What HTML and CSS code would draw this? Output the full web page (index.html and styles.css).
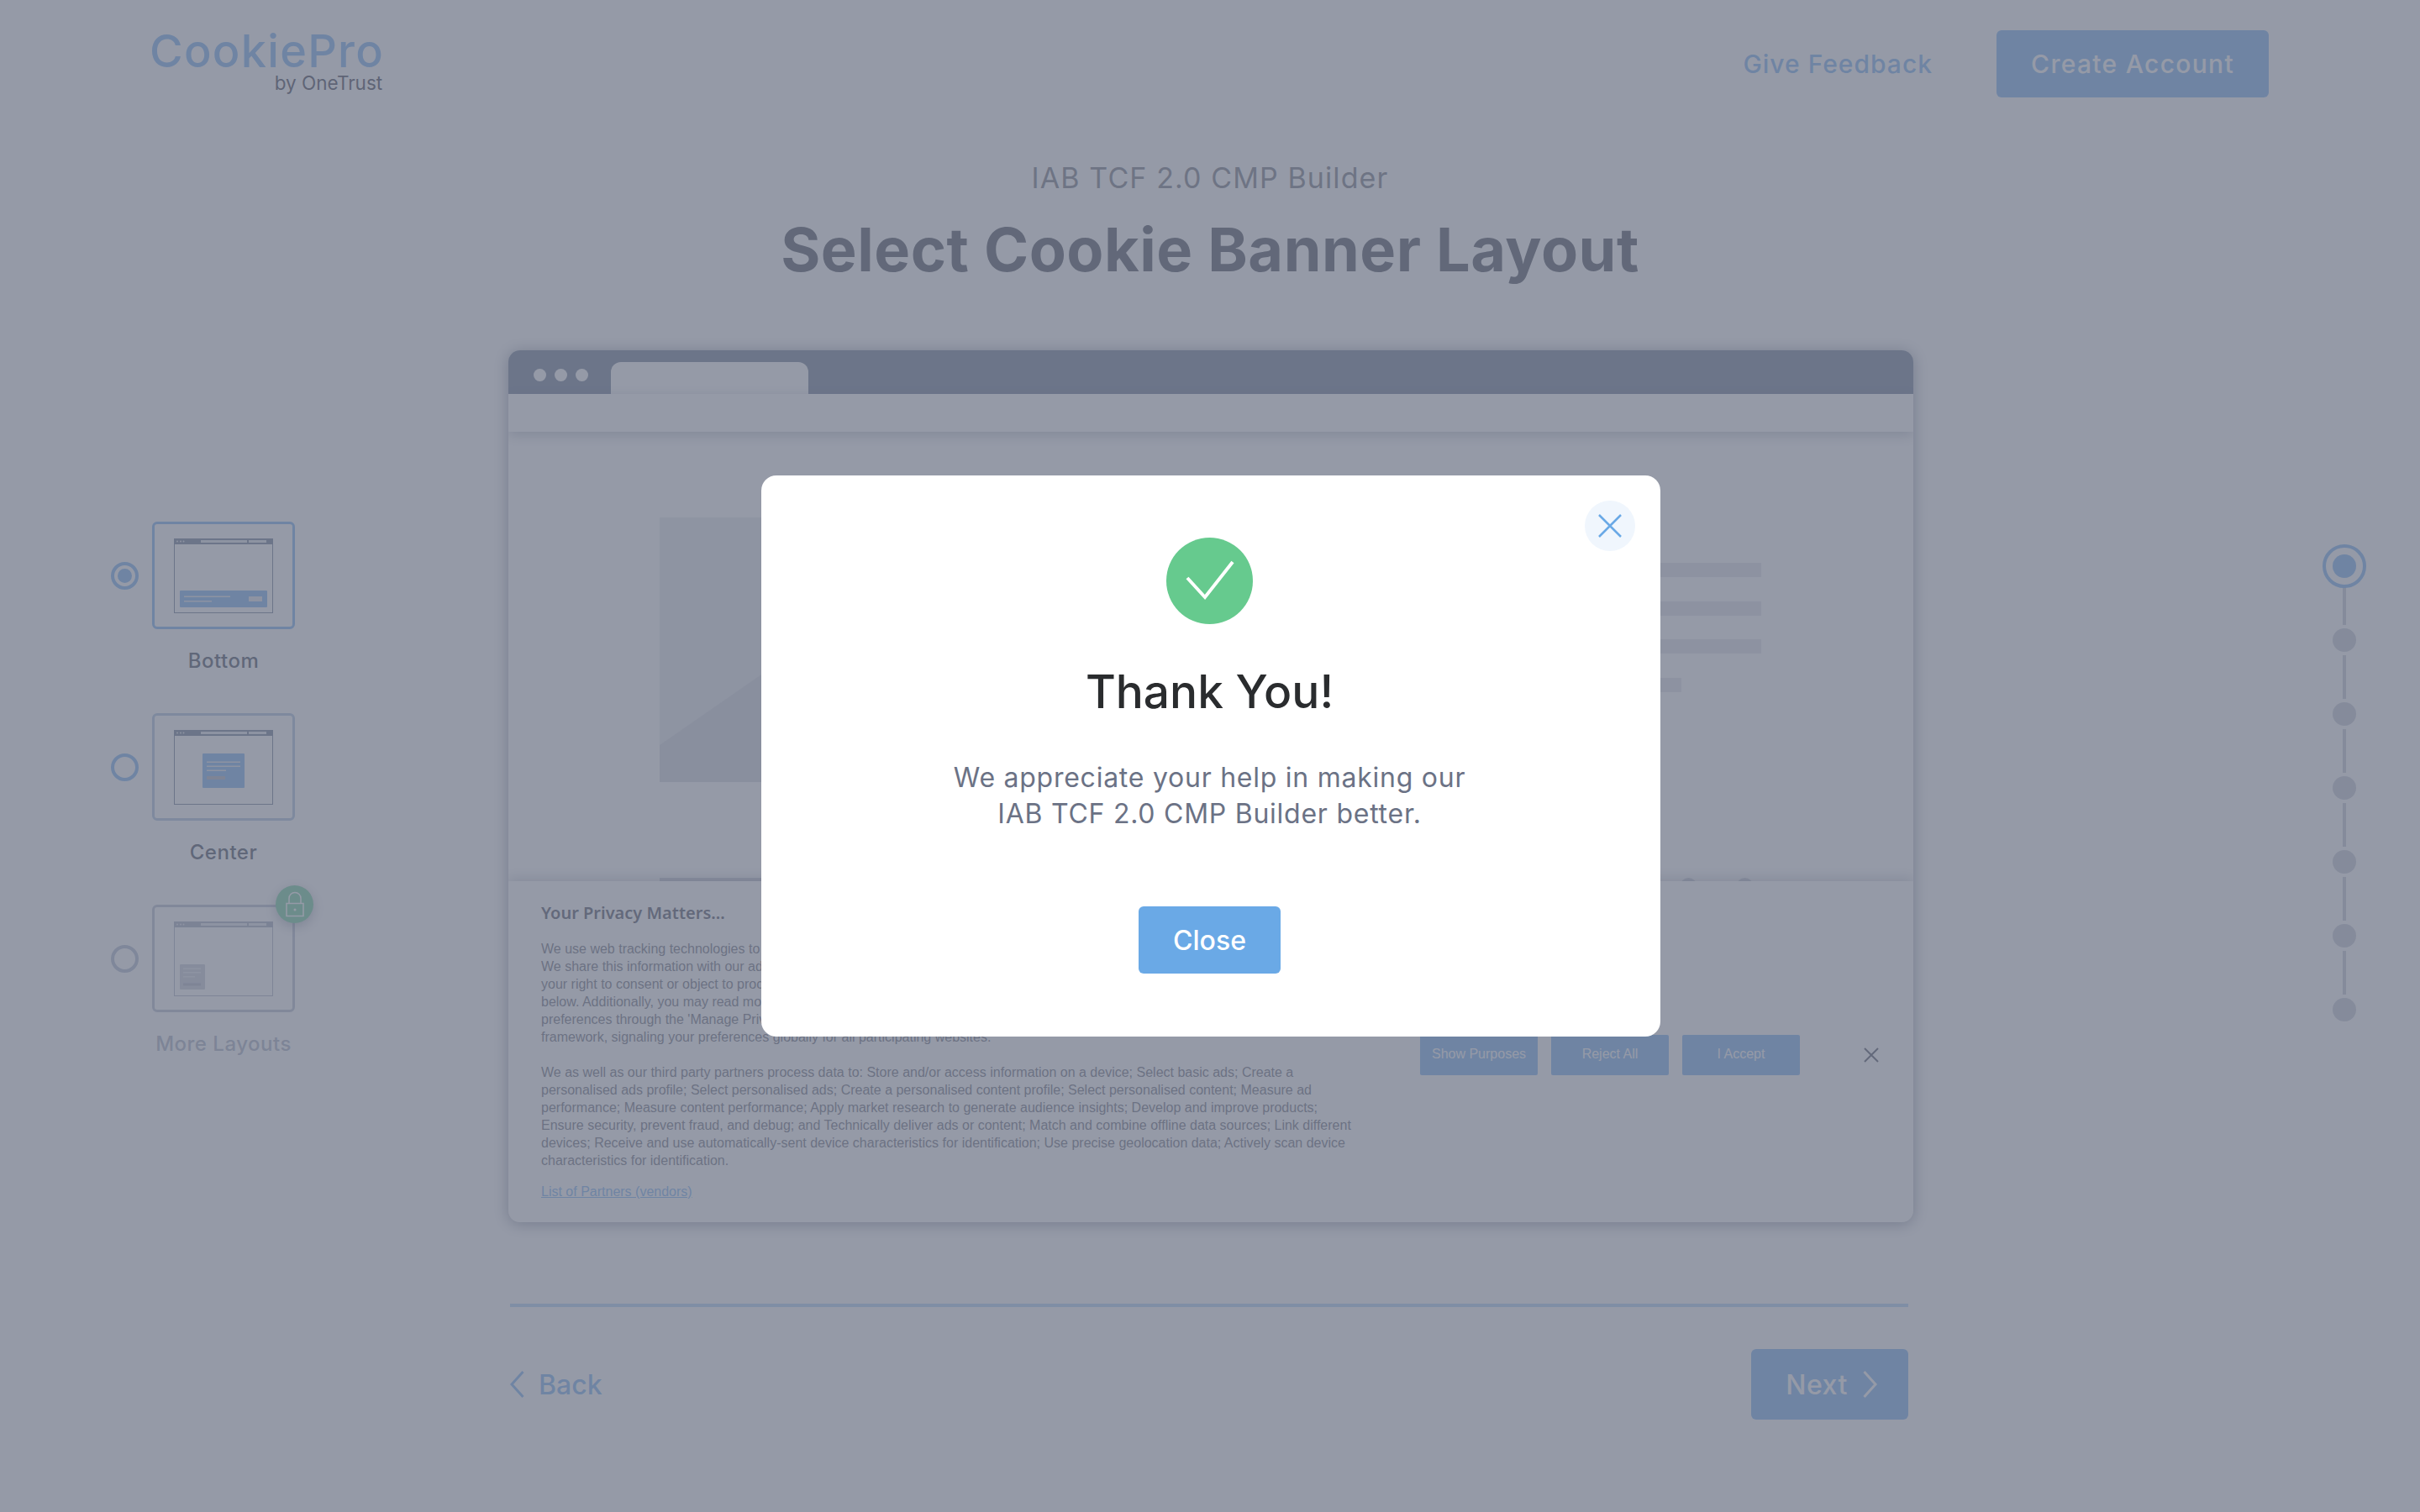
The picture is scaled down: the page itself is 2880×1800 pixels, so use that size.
FILE: index.html
```html
<!DOCTYPE html>
<html lang="en">
	<head>
		<meta charset="utf-8" />
		<title>IAB TCF 2.0 CMP Builder</title>
		<link rel="stylesheet" href="styles.css">
	</head>
	<body>
		<header class="topbar">
			<div class="logo">
				<div class="logo-name">CookiePro</div>
				<div class="logo-by">by OneTrust</div>
			</div>
			<nav class="topnav">
				<a class="feedback" href="#">Give Feedback</a>
				<a class="btn btn-account" href="#">Create Account</a>
			</nav>
		</header>

		<section class="intro">
			<p class="intro-sub">IAB TCF 2.0 CMP Builder</p>
			<h1 class="intro-title">Select Cookie Banner Layout</h1>
		</section>

		<main class="builder">
			<aside class="layouts">
				<div class="layout">
					<span class="radio radio-on"></span>
					<div class="thumb thumb-on">
						<svg class="mini" width="118" height="89" viewBox="0 0 118 89">
							<rect class="mini-frame" x="0.5" y="0.5" width="117" height="88"/>
							<rect class="mini-head" width="118" height="7"/>
							<circle class="mini-light" cx="4" cy="3.5" r="1"/><circle class="mini-light" cx="8" cy="3.5" r="1"/><circle class="mini-light" cx="11.5" cy="3.5" r="1"/>
							<rect class="mini-light" x="32" y="2" width="55" height="3"/><rect class="mini-light" x="89" y="2" width="21" height="3"/>
							<rect class="mini-blue" x="7" y="62" width="104" height="20" rx="1"/>
							<rect class="mini-light" x="12" y="68.5" width="55" height="1.5"/><rect class="mini-light" x="12" y="74" width="33" height="1.5"/>
							<rect class="mini-light" x="89" y="69" width="16" height="6"/>
						</svg>
					</div>
					<span class="layout-name">Bottom</span>
				</div>
				<div class="layout">
					<span class="radio"></span>
					<div class="thumb">
						<svg class="mini" width="118" height="89" viewBox="0 0 118 89">
							<rect class="mini-frame" x="0.5" y="0.5" width="117" height="88"/>
							<rect class="mini-head" width="118" height="7"/>
							<circle class="mini-light" cx="4" cy="3.5" r="1"/><circle class="mini-light" cx="8" cy="3.5" r="1"/><circle class="mini-light" cx="11.5" cy="3.5" r="1"/>
							<rect class="mini-light" x="32" y="2" width="55" height="3"/><rect class="mini-light" x="89" y="2" width="21" height="3"/>
							<rect class="mini-blue" x="34" y="28" width="50" height="41" rx="1"/>
							<rect class="mini-light" x="39" y="37.5" width="40" height="1.5"/><rect class="mini-light" x="39" y="42.5" width="40" height="1.5"/><rect class="mini-light" x="39" y="47.5" width="23" height="1.5"/>
							<rect class="mini-dim" x="39" y="55" width="22" height="4"/>
						</svg>
					</div>
					<span class="layout-name">Center</span>
				</div>
				<div class="layout layout-locked">
					<span class="radio"></span>
					<div class="thumb">
						<svg class="mini" width="118" height="89" viewBox="0 0 118 89">
							<rect class="mini-frame" x="0.5" y="0.5" width="117" height="88"/>
							<rect class="mini-head" width="118" height="7"/>
							<circle class="mini-light" cx="4" cy="3.5" r="1"/><circle class="mini-light" cx="8" cy="3.5" r="1"/><circle class="mini-light" cx="11.5" cy="3.5" r="1"/>
							<rect class="mini-light" x="32" y="2" width="55" height="3"/><rect class="mini-light" x="89" y="2" width="21" height="3"/>
							<rect class="mini-grey" x="7" y="51" width="30" height="30" rx="1"/>
							<rect class="mini-light" x="11" y="55.5" width="21" height="1.5"/><rect class="mini-light" x="11" y="60" width="21" height="1.5"/><rect class="mini-light" x="11" y="65" width="14" height="1.5"/>
							<rect class="mini-dim" x="11" y="73.5" width="21" height="3"/>
						</svg>
						<span class="lock">
							<svg width="24" height="32" viewBox="0 0 24 32">
								<rect class="lock-line" x="2" y="14.5" width="20" height="15"/>
								<path class="lock-line" d="M5 14.5V8.5a7 7 0 0 1 14 0v6"/>
								<circle class="lock-dot" cx="12" cy="22" r="1.5"/>
							</svg>
						</span>
					</div>
					<span class="layout-name">More Layouts</span>
				</div>
			</aside>

			<div class="stage">
				<div class="browser">
					<div class="browser-tabs">
						<span class="browser-dot"></span><span class="browser-dot"></span><span class="browser-dot"></span>
						<span class="browser-tab"></span>
					</div>
					<div class="browser-address"></div>
					<div class="browser-page">
						<div class="page-row">
							<svg class="page-image" width="620" height="315" viewBox="0 0 620 315">
								<rect class="image-bg" width="620" height="315"/>
								<path class="image-hill" d="M0 315V271L121 187L240 105L420 315Z"/>
							</svg>
							<div class="page-lines">
								<span class="page-line"></span><span class="page-line"></span><span class="page-line"></span><span class="page-line page-line-short"></span>
							</div>
						</div>
						<div class="page-peek">
							<span class="peek-bar"></span>
							<span class="peek-dots"><span class="peek-dot"></span><span class="peek-dot"></span></span>
						</div>
					</div>
					<div class="banner">
						<div class="banner-copy">
							<h3 class="banner-title">Your Privacy Matters...</h3>
							<p class="banner-text">We use web tracking technologies to collect information about your device and browsing.<br>We share this information with our advertising and analytics partners. You can exercise<br>your right to consent or object to processing based on legitimate interest using the links<br>below. Additionally, you may read more in our policy and change or withdraw your<br>preferences through the 'Manage Privacy Preferences' link using the industry consent<br>framework, signaling your preferences globally for all participating websites.</p>
							<p class="banner-text">We as well as our third party partners process data to: Store and/or access information on a device; Select basic ads; Create a<br>personalised ads profile; Select personalised ads; Create a personalised content profile; Select personalised content; Measure ad<br>performance; Measure content performance; Apply market research to generate audience insights; Develop and improve products;<br>Ensure security, prevent fraud, and debug; and Technically deliver ads or content; Match and combine offline data sources; Link different<br>devices; Receive and use automatically-sent device characteristics for identification; Use precise geolocation data; Actively scan device<br>characteristics for identification.</p>
							<a class="banner-link" href="#">List of Partners (vendors)</a>
						</div>
						<div class="banner-actions">
							<button class="banner-btn">Show Purposes</button>
							<button class="banner-btn">Reject All</button>
							<button class="banner-btn">I Accept</button>
							<svg class="banner-x" width="18" height="18" viewBox="0 0 18 18"><path d="M1 1L17 17M17 1L1 17"/></svg>
						</div>
					</div>
				</div>
				<div class="wizard-foot">
					<a class="back" href="#">
						<svg class="chevron" width="17" height="32" viewBox="0 0 17 32"><path d="M15.5 1L2 16L15.5 31"/></svg>
						Back
					</a>
					<a class="btn btn-next" href="#">
						Next
						<svg class="chevron" width="17" height="32" viewBox="0 0 17 32"><path d="M1.5 1L15 16L1.5 31"/></svg>
					</a>
				</div>
			</div>

			<aside class="steps">
				<span class="step step-on"></span>
				<span class="step-line"></span><span class="step"></span>
				<span class="step-line"></span><span class="step"></span>
				<span class="step-line"></span><span class="step"></span>
				<span class="step-line"></span><span class="step"></span>
				<span class="step-line"></span><span class="step"></span>
				<span class="step-line"></span><span class="step"></span>
			</aside>
		</main>

		<div class="overlay">
			<div class="modal">
				<button class="modal-x">
					<svg width="28" height="28" viewBox="0 0 28 28"><path d="M1 1L27 27M27 1L1 27"/></svg>
				</button>
				<svg class="modal-check" width="103" height="103" viewBox="0 0 103 103">
					<circle class="check-bg" cx="51.5" cy="51.5" r="51.5"/>
					<path class="check-mark" d="M25 48L46 71L79 29"/>
				</svg>
				<h2 class="modal-title">Thank You!</h2>
				<p class="modal-text">We appreciate your help in making our<br>IAB TCF 2.0 CMP Builder better.</p>
				<button class="btn-close">Close</button>
			</div>
		</div>
	</body>
</html>
```

FILE: styles.css
```css
html, body {
	margin: 0;
	padding: 0;
	width: 2880px;
	height: 1800px;
	overflow: hidden;
}
body {
	font-family: Inter, "Noto Sans", sans-serif;
	background-color: #fff;
	color: #30344c;
}
a {
	text-decoration: none;
}
h1, h2, h3, p {
	margin: 0;
}

.topbar {
	box-sizing: border-box;
	height: 116px;
	padding: 36px 180px 0 178px;
	display: flex;
	justify-content: space-between;
	align-items: flex-start;
}
.logo {
	text-align: right;
}
.logo-name {
	font-size: 54px;
	line-height: 50px;
	letter-spacing: 1.3px;
	color: #68a8f0;
	font-weight: 500;
}
.logo-by {
	font-size: 22.5px;
	line-height: 24px;
	color: #282a3c;
	margin-top: 1px;
	margin-right: 2px;
}
.topnav {
	display: flex;
	align-items: center;
	gap: 76px;
	font-size: 30px;
	font-weight: 500;
}
.feedback {
	color: #68a8f0;
	letter-spacing: 1px;
}
.btn {
	display: flex;
	align-items: center;
	justify-content: center;
	box-sizing: border-box;
	background-color: #68a8f0;
	color: #fff;
	border-radius: 6px;
	font-weight: 500;
	font-size: 30px;
}
.btn-account {
	width: 324px;
	height: 80px;
	letter-spacing: 1.3px;
}

.intro {
	box-sizing: border-box;
	height: 301px;
	padding-top: 75px;
	text-align: center;
}
.intro-sub {
	font-size: 34px;
	line-height: 42px;
	color: #646874;
	letter-spacing: 1.1px;
}
.intro-title {
	margin-top: 24px;
	font-size: 72px;
	line-height: 80px;
	font-weight: 700;
	letter-spacing: 0.5px;
	color: #343a48;
}

.builder {
	display: grid;
	grid-template-columns: 605px 1672px 603px;
}

.layouts {
	padding: 204px 0 0 132px;
}
.layout {
	display: grid;
	grid-template-columns: 33px 170px;
	column-gap: 16px;
	align-items: center;
	height: 228px;
	grid-template-rows: 128px auto;
	row-gap: 23px;
	align-content: start;
}
.radio {
	box-sizing: border-box;
	width: 33px;
	height: 33px;
	border-radius: 50%;
	border: 4px solid #68a8f0;
	display: flex;
	align-items: center;
	justify-content: center;
}
.radio-on::after {
	content: "";
	width: 17px;
	height: 17px;
	border-radius: 50%;
	background-color: #68a8f0;
}
.layout-locked .radio {
	border-color: #a8b4cc;
}
.thumb {
	box-sizing: border-box;
	position: relative;
	width: 170px;
	height: 128px;
	border: 3px solid #a4bcdc;
	border-radius: 6px;
	display: flex;
	align-items: center;
	justify-content: center;
}
.thumb-on {
	border-color: #68a8f0;
}
.layout-locked .thumb {
	border-color: #b0b8cc;
}
.layout-name {
	grid-column: 2;
	text-align: center;
	font-size: 24px;
	line-height: 30px;
	font-weight: 500;
	letter-spacing: 0.5px;
	color: #2c3448;
}
.layout-locked .layout-name {
	color: #a0a8bc;
}
.mini-frame {
	fill: #fff;
	stroke: #5c6c88;
}
.mini-head {
	fill: #5c6c88;
}
.mini-light {
	fill: #dfe3ea;
}
.mini-blue {
	fill: #68a8f0;
}
.mini-grey {
	fill: #c4c8d4;
}
.mini-dim {
	fill: #a4a8b8;
}
.layout-locked .mini-frame {
	stroke: #a4acc0;
}
.layout-locked .mini-head {
	fill: #9aa2b8;
}
.lock {
	position: absolute;
	right: -25px;
	top: -26px;
	width: 45px;
	height: 45px;
	border-radius: 50%;
	background-color: #5cc690;
	box-shadow: 0 4px 14px rgba(40, 50, 80, 0.4);
	display: flex;
	align-items: center;
	justify-content: center;
}
.lock-line {
	fill: none;
	stroke: #fff;
	stroke-width: 1.5;
}
.lock-dot {
	fill: #fff;
}

.browser {
	box-sizing: border-box;
	height: 1038px;
	border-radius: 14px;
	overflow: hidden;
	display: flex;
	flex-direction: column;
	background-color: #fff;
	box-shadow: 0 2px 18px rgba(40, 50, 80, 0.6);
}
.stage {
	min-width: 0;
}
.browser-tabs {
	height: 52px;
	flex: none;
	background-color: #5c6c88;
	display: flex;
	align-items: flex-end;
	padding-left: 30px;
	box-sizing: border-box;
}
.browser-dot {
	width: 15px;
	height: 15px;
	margin: 0 10px 15px 0;
	border-radius: 50%;
	background-color: #fff;
}
.browser-tab {
	width: 235px;
	height: 38px;
	margin-left: 17px;
	border-radius: 12px 12px 0 0;
	background-color: #fff;
}
.browser-address {
	height: 45px;
	flex: none;
	background-color: #fff;
	box-shadow: 0 4px 14px rgba(40, 50, 80, 0.35);
	position: relative;
}
.browser-page {
	flex: 1;
	min-height: 0;
	overflow: hidden;
	padding: 102px 181px 0 180px;
	display: flex;
	flex-direction: column;
	justify-content: space-between;
}
.page-row {
	display: flex;
	justify-content: space-between;
}
.image-bg {
	fill: #e2e5ea;
}
.image-hill {
	fill: #d0d4dc;
}
.page-lines {
	display: flex;
	flex-direction: column;
	gap: 28.5px;
	width: 460px;
	padding-top: 54px;
}
.page-line {
	height: 17px;
	background-color: #dde0e8;
}
.page-line-short {
	width: 365px;
}
.page-peek {
	height: 4px;
	flex: none;
	display: flex;
	justify-content: space-between;
}
.peek-bar {
	width: 620px;
	height: 4px;
	background-color: #c4c8d4;
}
.peek-dots {
	display: flex;
	gap: 48px;
	padding-right: 10px;
}
.peek-dot {
	width: 19px;
	height: 19px;
	border-radius: 50%;
	background-color: #c4c8d4;
}

.banner {
	box-sizing: border-box;
	height: 406px;
	flex: none;
	background-color: #fff;
	box-shadow: 0 -3px 14px rgba(40, 50, 80, 0.3);
	padding: 24px 0 0 39px;
	display: flex;
	position: relative;
}
.banner-copy {
	width: 1046px;
	flex: none;
}
.banner-title {
	font-family: "Noto Sans", sans-serif;
	font-size: 20px;
	line-height: 28px;
	font-weight: 600;
	color: #383c50;
}
.banner-text {
	font-family: "Liberation Sans", sans-serif;
	font-size: 16px;
	line-height: 21px;
	color: #5c6070;
	margin-top: 21px;
	white-space: nowrap;
}
.banner-title + .banner-text {
	margin-top: 18px;
}
.banner-link {
	display: block;
	margin-top: 16px;
	font-family: "Liberation Sans", sans-serif;
	font-size: 16px;
	line-height: 21px;
	color: #68a8f0;
	text-decoration: underline;
}
.banner-actions {
	display: flex;
	align-items: center;
	gap: 16px;
	height: 48px;
	margin-top: 159px;
}
.banner-btn {
	width: 140px;
	height: 48px;
	padding: 0 0 2px;
	border: 0;
	border-radius: 2px;
	background-color: #68a8f0;
	color: #fff;
	font-family: "Liberation Sans", sans-serif;
	font-size: 16px;
}
.banner-x {
	margin-left: 60px;
	fill: none;
	stroke: #383c50;
	stroke-width: 2;
}

.wizard-foot {
	margin: 97px 6px 0 2px;
	padding-top: 50px;
	border-top: 4px solid #a8d0f8;
	display: flex;
	justify-content: space-between;
	align-items: center;
}
.back {
	display: flex;
	align-items: center;
	gap: 17px;
	font-size: 32px;
	font-weight: 500;
	color: #68a8f0;
}
.chevron {
	fill: none;
	stroke: currentColor;
	stroke-width: 3;
}
.btn-next {
	width: 187px;
	height: 84px;
	padding-left: 4px;
	gap: 18px;
	font-size: 32px;
	letter-spacing: 0.5px;
}

.steps {
	padding: 231px 0 0 487px;
	display: flex;
	flex-direction: column;
	align-items: center;
	width: 52px;
	gap: 4px;
}
.step {
	box-sizing: border-box;
	width: 28px;
	height: 28px;
	flex: none;
	border-radius: 50%;
	background-color: #c0c4d0;
}
.step-line {
	width: 4px;
	height: 52px;
	flex: none;
	background-color: #c0c4d0;
}
.step-on {
	position: relative;
	z-index: 1;
	width: 52px;
	height: 52px;
	border: 4px solid #68a8f0;
	background-color: #fff;
	display: flex;
	align-items: center;
	justify-content: center;
	margin-bottom: -12px;
}
.step-on::after {
	content: "";
	width: 28px;
	height: 28px;
	border-radius: 50%;
	background-color: #68a8f0;
}

.overlay {
	position: fixed;
	z-index: 2;
	top: 0;
	left: 0;
	width: 2880px;
	height: 1800px;
	background-color: rgba(113, 120, 137, 0.75);
	display: flex;
	align-items: center;
	justify-content: center;
}
.modal {
	box-sizing: border-box;
	position: relative;
	width: 1070px;
	height: 668px;
	margin-left: 2px;
	padding: 74px 3px 0 0;
	border-radius: 18px;
	background-color: #fff;
	display: flex;
	flex-direction: column;
	align-items: center;
}
.modal-x {
	position: absolute;
	top: 30px;
	right: 30px;
	width: 60px;
	height: 60px;
	padding: 0;
	border: 0;
	border-radius: 50%;
	background-color: #f0f6fd;
	display: flex;
	align-items: center;
	justify-content: center;
}
.modal-x path {
	fill: none;
	stroke: #6aa9e6;
	stroke-width: 2.5;
}
.check-bg {
	fill: #66ca8e;
}
.check-mark {
	fill: none;
	stroke: #fff;
	stroke-width: 4;
}
.modal-title {
	margin-top: 46px;
	font-size: 55px;
	line-height: 68px;
	font-weight: 500;
	color: #2a2c2e;
}
.modal-text {
	margin-top: 47px;
	font-size: 32px;
	line-height: 43px;
	text-align: center;
	letter-spacing: 0.75px;
	color: #6b7285;
}
.btn-close {
	margin-top: 89px;
	width: 169px;
	height: 80px;
	border: 0;
	border-radius: 6px;
	background-color: #6aa9e6;
	color: #fff;
	font-family: Inter, "Noto Sans", sans-serif;
	font-size: 32px;
	font-weight: 500;
}
```
